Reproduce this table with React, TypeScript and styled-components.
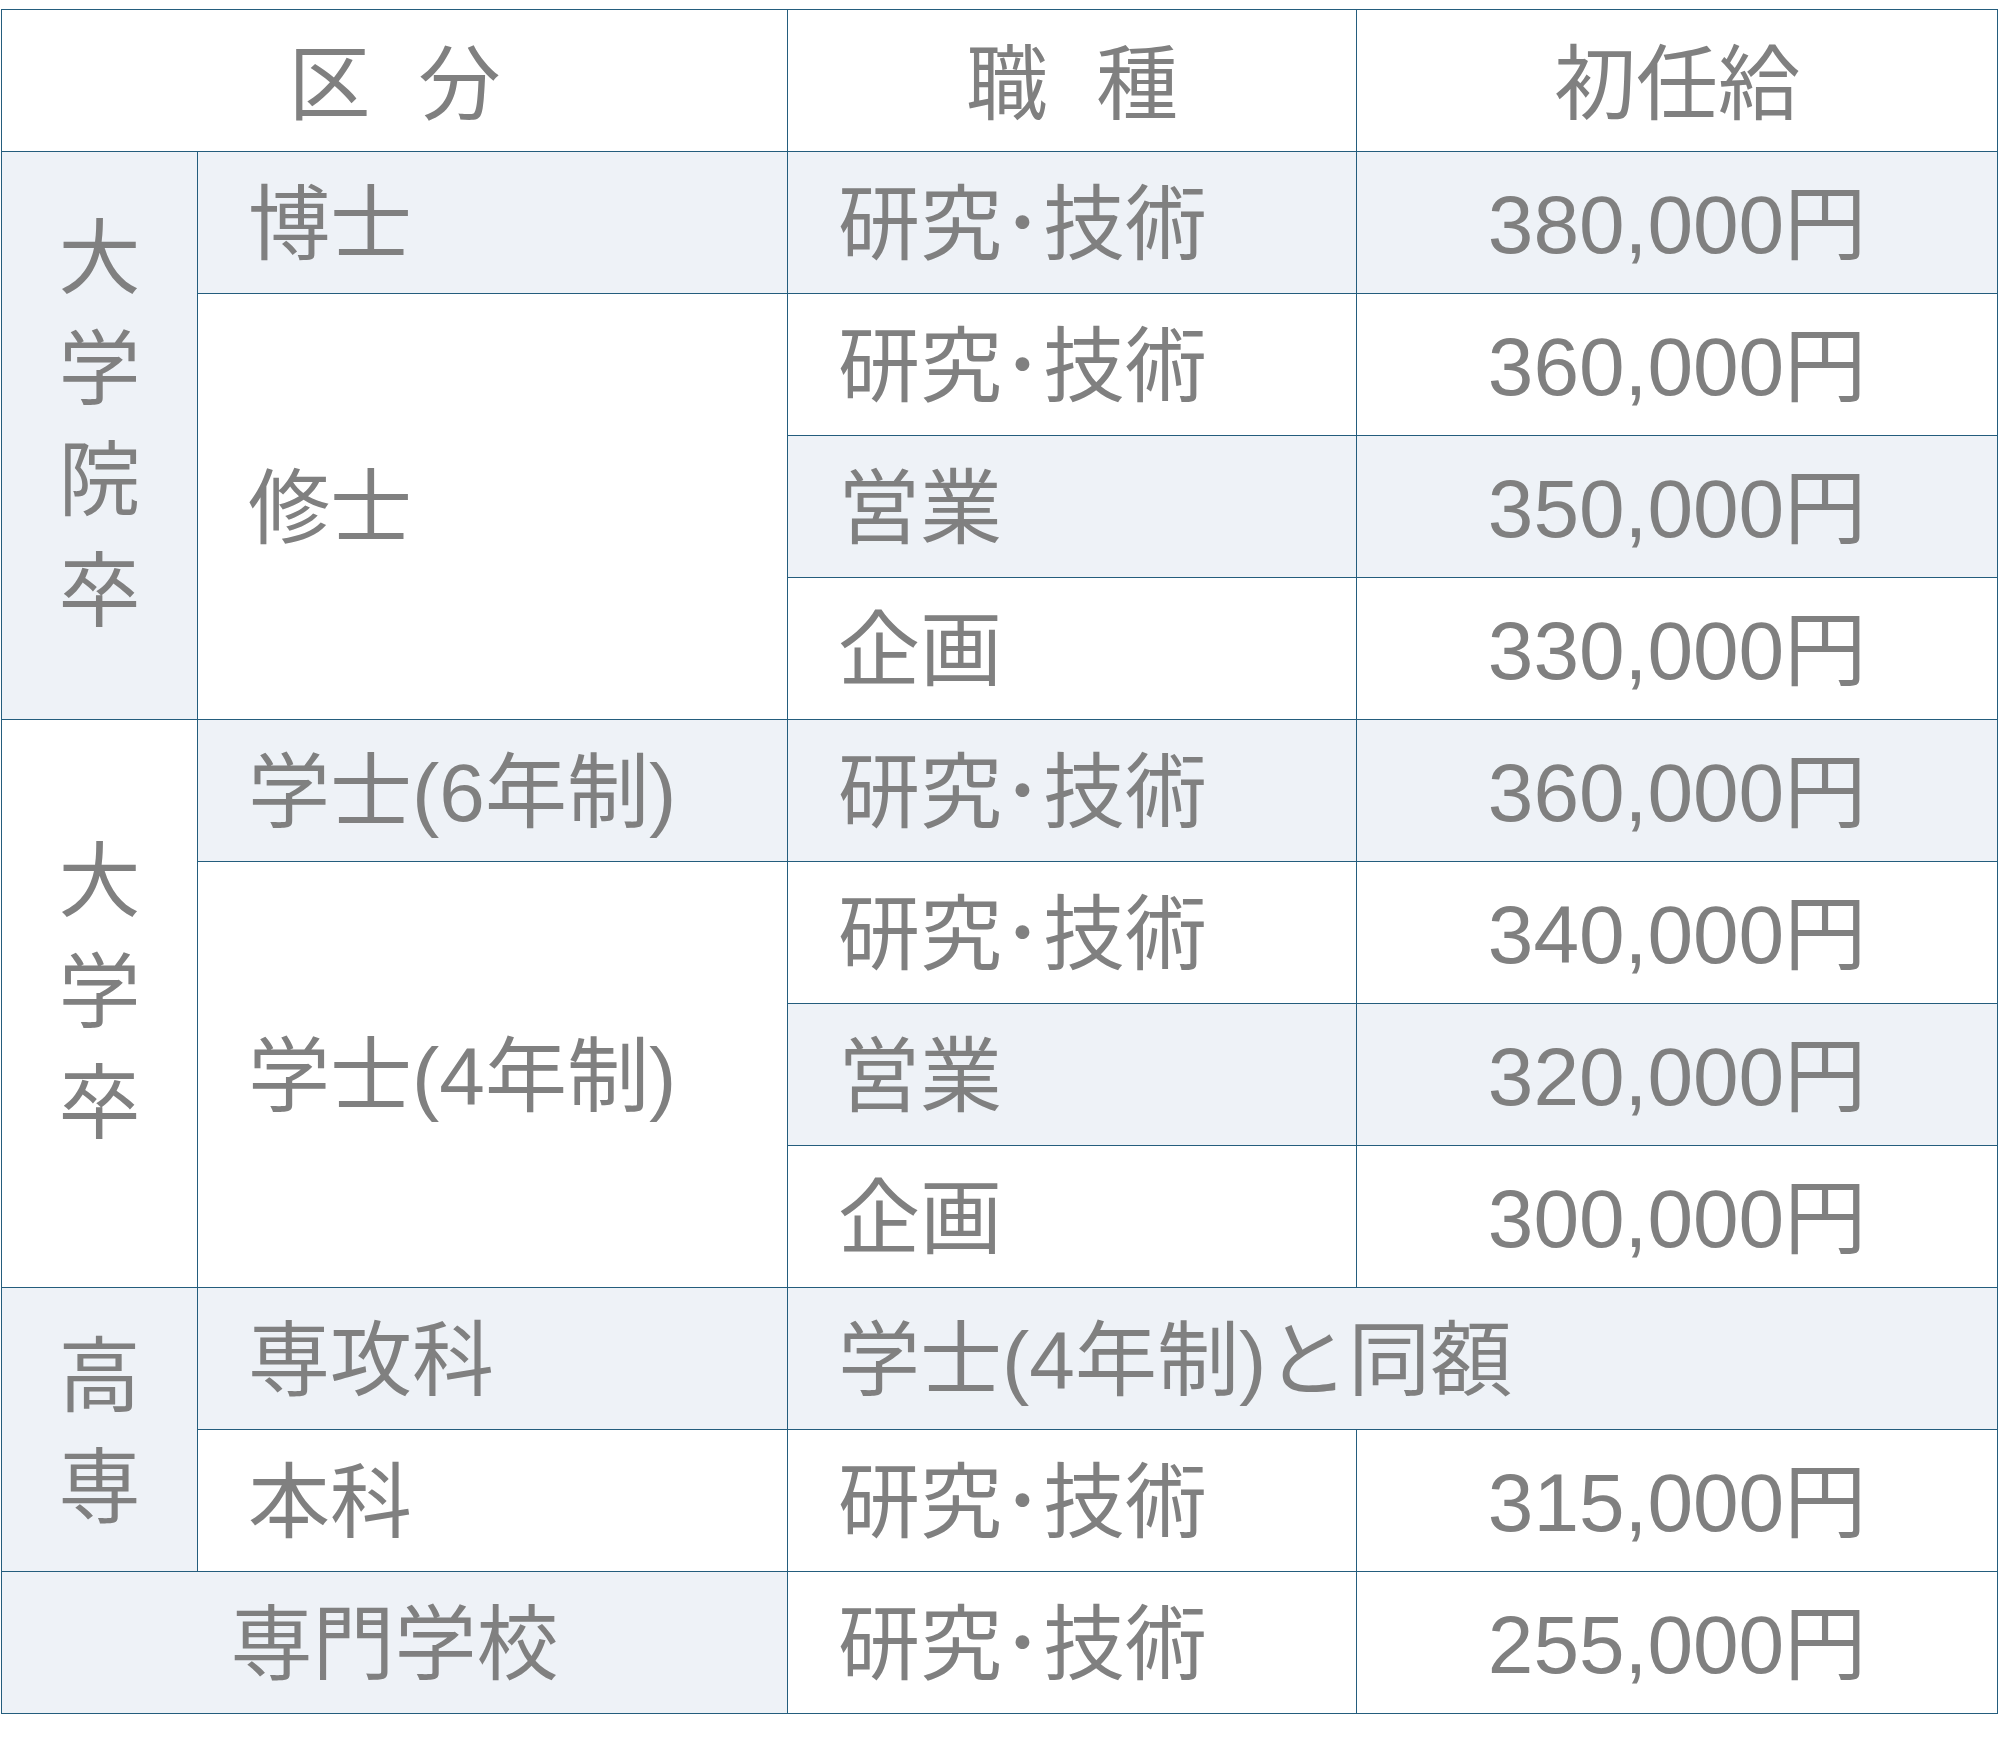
import * as React from 'react'
import styled, { createGlobalStyle } from 'styled-components'

const GlobalStyle = createGlobalStyle`
  html, body {
    margin: 0;
    padding: 0;
    background: #ffffff;
  }
`

const Wrapper = styled.div`
  padding: 9px 0 0 1px;
`

const Table = styled.table`
  width: 1996px;
  border-collapse: collapse;
  table-layout: fixed;
  font-family: 'Liberation Sans', 'Noto Sans CJK JP', sans-serif;
  font-size: 82px;
  color: #808080;
`

const Row = styled.tr`
  height: 142px;
`

interface ICellProps {
  $shade?: boolean
  $center?: boolean
  $light?: boolean
}

const Cell = styled.td<ICellProps>`
  border: 1px solid #245d7d;
  ${(p) => p.$light && 'border-left-color: #7eaac4;'}
  background: ${(p) => (p.$shade ? '#eef2f7' : '#ffffff')};
  text-align: ${(p) => (p.$center ? 'center' : 'left')};
  padding: 6px 0 0 ${(p) => (p.$center ? '0' : '50px')};
  vertical-align: middle;
  white-space: nowrap;
  line-height: 1.2;
`

const HeadCell = styled(Cell).attrs({ as: 'th' })`
  font-weight: normal;
  padding-top: 10px;
  word-spacing: 25px;
`

const VerticalLabel = styled.div<{ $lift?: number }>`
  width: 1em;
  margin: 0 auto;
  white-space: normal;
  word-break: break-all;
  line-height: 111px;
  text-align: center;
  transform: translateY(${(p) => -(p.$lift ?? 14)}px);
`

interface ISalary {
  job: string
  pay: string
}

const Pay: React.FC<ISalary & { shade?: boolean }> = ({ job, pay, shade }) => (
  <>
    <Cell $shade={shade} $light>{job}</Cell>
    <Cell $shade={shade} $center>{pay}</Cell>
  </>
)

const RD = '研究･技術'

const App: React.FC = () => (
  <>
    <GlobalStyle />
    <Wrapper>
      <Table>
        <colgroup>
          <col style={{ width: 196 }} />
          <col style={{ width: 590 }} />
          <col style={{ width: 569 }} />
          <col style={{ width: 641 }} />
        </colgroup>
        <thead>
          <Row>
            <HeadCell colSpan={2} $center>区 分</HeadCell>
            <HeadCell $center $light>職 種</HeadCell>
            <HeadCell $center>初任給</HeadCell>
          </Row>
        </thead>
        <tbody>
          <Row>
            <Cell rowSpan={4} $shade $center><VerticalLabel>大学院卒</VerticalLabel></Cell>
            <Cell $shade>博士</Cell>
            <Pay job={RD} pay="380,000円" shade />
          </Row>
          <Row>
            <Cell rowSpan={3}>修士</Cell>
            <Pay job={RD} pay="360,000円" />
          </Row>
          <Row>
            <Pay job="営業" pay="350,000円" shade />
          </Row>
          <Row>
            <Pay job="企画" pay="330,000円" />
          </Row>
          <Row>
            <Cell rowSpan={4} $center><VerticalLabel>大学卒</VerticalLabel></Cell>
            <Cell $shade>学士(6年制)</Cell>
            <Pay job={RD} pay="360,000円" shade />
          </Row>
          <Row>
            <Cell rowSpan={3}>学士(4年制)</Cell>
            <Pay job={RD} pay="340,000円" />
          </Row>
          <Row>
            <Pay job="営業" pay="320,000円" shade />
          </Row>
          <Row>
            <Pay job="企画" pay="300,000円" />
          </Row>
          <Row>
            <Cell rowSpan={2} $shade $center><VerticalLabel $lift={1}>高専</VerticalLabel></Cell>
            <Cell $shade>専攻科</Cell>
            <Cell colSpan={2} $shade $light>学士(4年制)と同額</Cell>
          </Row>
          <Row>
            <Cell>本科</Cell>
            <Pay job={RD} pay="315,000円" />
          </Row>
          <Row>
            <Cell colSpan={2} $shade $center>専門学校</Cell>
            <Pay job={RD} pay="255,000円" />
          </Row>
        </tbody>
      </Table>
    </Wrapper>
  </>
)

export default App
